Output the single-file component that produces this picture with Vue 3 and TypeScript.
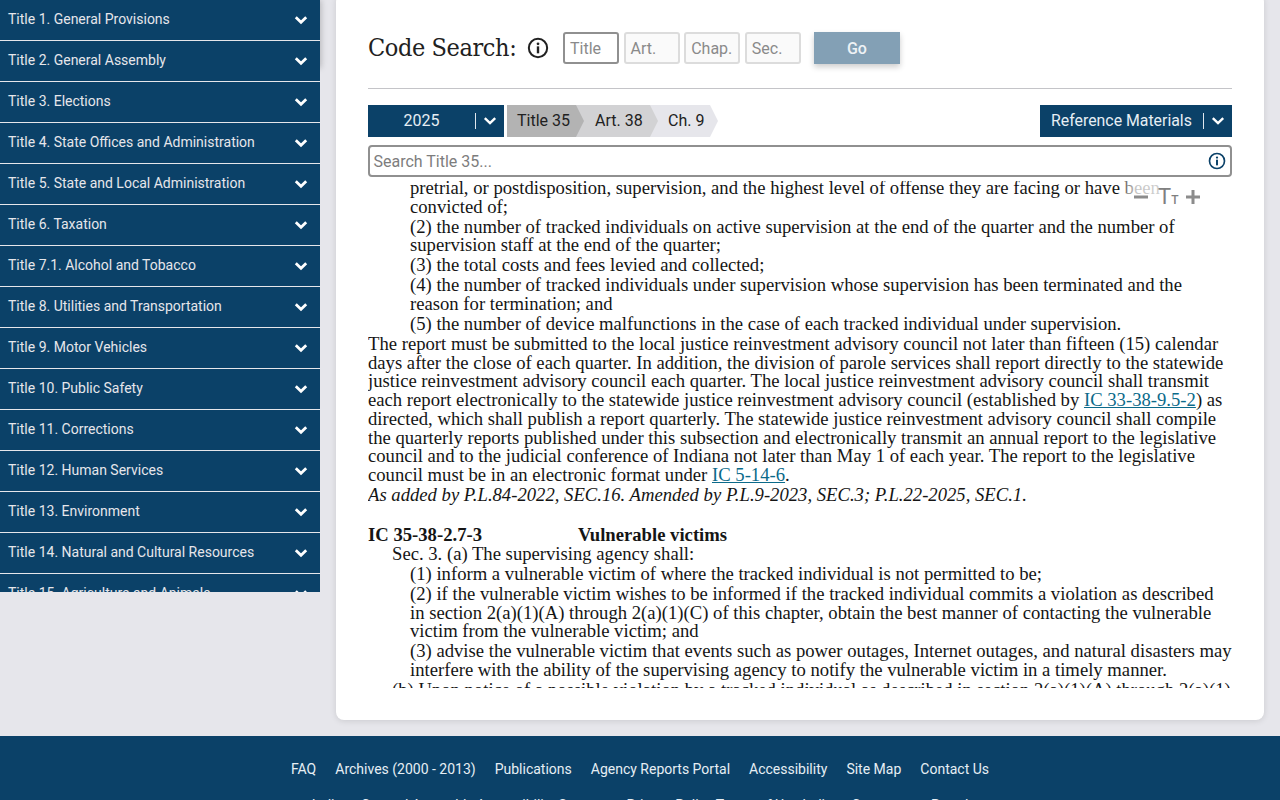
<script setup lang="ts">
const titles: string[] = [
  'Title 1. General Provisions',
  'Title 2. General Assembly',
  'Title 3. Elections',
  'Title 4. State Offices and Administration',
  'Title 5. State and Local Administration',
  'Title 6. Taxation',
  'Title 7.1. Alcohol and Tobacco',
  'Title 8. Utilities and Transportation',
  'Title 9. Motor Vehicles',
  'Title 10. Public Safety',
  'Title 11. Corrections',
  'Title 12. Human Services',
  'Title 13. Environment',
  'Title 14. Natural and Cultural Resources',
  'Title 15. Agriculture and Animals',
]
const links: string[] = ['FAQ', 'Archives (2000 - 2013)', 'Publications', 'Agency Reports Portal', 'Accessibility', 'Site Map', 'Contact Us']
</script>

<template>
  <div class="page">
    <div class="top">
      <div class="side-col">
        <div class="side-shadow"></div>
        <nav class="side">
          <div v-for="t in titles" :key="t" class="side-item">
            <span>{{ t }}</span>
            <svg class="chev" viewBox="0 0 14 10" width="14" height="10"><path d="M1.8 2.2 7 7.2l5.2-5" fill="none" stroke="#fff" stroke-width="2.8" /></svg>
          </div>
        </nav>
      </div>
      <main class="card">
        <div class="search-row">
          <h1>Code Search:</h1>
          <svg class="info" viewBox="0 0 24 24" width="22" height="22"><circle cx="12" cy="12" r="10" fill="none" stroke="#212121" stroke-width="2.2" /><circle cx="12" cy="7.4" r="1.5" fill="#212121" /><rect x="10.7" y="10.2" width="2.6" height="7.6" fill="#212121" /></svg>
          <div class="fld active">Title</div>
          <div class="fld">Art.</div>
          <div class="fld">Chap.</div>
          <div class="fld">Sec.</div>
          <button class="go">Go</button>
        </div>
        <div class="tools">
          <div class="sel year"><span class="sel-label">2025</span><i></i><svg viewBox="0 0 14 10" width="14" height="10"><path d="M1.8 2.2 7 7.2l5.2-5" fill="none" stroke="#fff" stroke-width="2.4" /></svg></div>
          <div class="crumbs">
            <span class="crumb c1">Title 35</span>
            <span class="crumb c2">Art. 38</span>
            <span class="crumb c3">Ch. 9</span>
          </div>
          <div class="sel ref"><span class="sel-label">Reference Materials</span><i></i><svg viewBox="0 0 14 10" width="14" height="10"><path d="M1.8 2.2 7 7.2l5.2-5" fill="none" stroke="#fff" stroke-width="2.4" /></svg></div>
        </div>
        <div class="searchbox">
          <span>Search Title 35...</span>
          <svg viewBox="0 0 24 24" width="18" height="18"><circle cx="12" cy="12" r="10" fill="none" stroke="#0b4168" stroke-width="2.2" /><circle cx="12" cy="7.4" r="1.5" fill="#0b4168" /><rect x="10.7" y="10.2" width="2.6" height="7.6" fill="#0b4168" /></svg>
        </div>
        <div class="doc-wrap">
          <div class="fontctl">
            <svg viewBox="0 0 14 14" width="14" height="14"><rect x="0" y="5.5" width="14" height="3" fill="#8c8c8c" /></svg>
            <span class="tt"><b>T</b><small>T</small></span>
            <svg viewBox="0 0 14 14" width="14" height="14"><path d="M0 7h14M7 0v14" stroke="#8c8c8c" stroke-width="3" fill="none" /></svg>
          </div>
          <div class="doc">
            <div class="scroll">
              <p class="i2">pretrial, or postdisposition, supervision, and the highest level of offense they are facing or have been convicted of;</p>
              <p class="i2">(2) the number of tracked individuals on active supervision at the end of the quarter and the number of supervision staff at the end of the quarter;</p>
              <p class="i2">(3) the total costs and fees levied and collected;</p>
              <p class="i2">(4) the number of tracked individuals under supervision whose supervision has been terminated and the reason for termination; and</p>
              <p class="i2">(5) the number of device malfunctions in the case of each tracked individual under supervision.</p>
              <p>The report must be submitted to the local justice reinvestment advisory council not later than fifteen (15) calendar days after the close of each quarter. In addition, the division of parole services shall report directly to the statewide justice reinvestment advisory council each quarter. The local justice reinvestment advisory council shall transmit each report electronically to the statewide justice reinvestment advisory council (established by <a>IC 33-38-9.5-2</a>) as directed, which shall publish a report quarterly. The statewide justice reinvestment advisory council shall compile the quarterly reports published under this subsection and electronically transmit an annual report to the legislative council and to the judicial conference of Indiana not later than May 1 of each year. The report to the legislative council must be in an electronic format under <a>IC 5-14-6</a>.</p>
              <p class="hist">As added by P.L.84-2022, SEC.16. Amended by P.L.9-2023, SEC.3; P.L.22-2025, SEC.1.</p>
              <h2><span>IC 35-38-2.7-3</span>Vulnerable victims</h2>
              <p class="i1">Sec. 3. (a) The supervising agency shall:</p>
              <p class="i2">(1) inform a vulnerable victim of where the tracked individual is not permitted to be;</p>
              <p class="i2">(2) if the vulnerable victim wishes to be informed if the tracked individual commits a violation as described in section 2(a)(1)(A) through 2(a)(1)(C) of this chapter, obtain the best manner of contacting the vulnerable victim from the vulnerable victim; and</p>
              <p class="i2">(3) advise the vulnerable victim that events such as power outages, Internet outages, and natural disasters may interfere with the ability of the supervising agency to notify the vulnerable victim in a timely manner.</p>
              <p class="i1">(b) Upon notice of a possible violation by a tracked individual as described in section 2(a)(1)(A) through 2(a)(1)</p>
            </div>
          </div>
        </div>
      </main>
    </div>
    <footer class="foot">
      <div class="links"><span v-for="l in links" :key="l">{{ l }}</span></div>
      <div class="legal">Indiana General Assembly Accessibility Statement Privacy Policy Terms of Use Indiana Government Portal</div>
    </footer>
  </div>
</template>

<style>
html, body { margin: 0; background: #e6e6eb; }
body { overflow: hidden; }
</style>

<style scoped>
.page { width: 1280px; height: 800px; overflow: hidden; background: #e6e6eb; font-family: Roboto, sans-serif; }
.top { display: flex; height: 736px; }
.side-col { position: relative; width: 320px; flex: none; }
.side-shadow { position: absolute; left: 0; top: 0; width: 320px; height: 68px; box-shadow: 1px 0 6px rgba(0,0,0,.22); }
.side { position: relative; width: 320px; height: 592px; overflow: hidden; background: #0b4168; }
.side-item { box-sizing: border-box; height: 41px; border-bottom: 1px solid #e6e6eb; display: flex; align-items: center; justify-content: space-between; padding: 0 12px 2px 8px; color: #e6e6eb; font-size: 14px; }
.chev { margin-top: 1px; }
.card { margin: -6px 0 0 16px; width: 928px; height: 726px; background: #fff; border-radius: 8px; box-shadow: 0 1px 6px rgba(0,0,0,.12); padding: 38px 32px 32px; box-sizing: border-box; display: flex; flex-direction: column; }
.search-row { display: flex; align-items: center; height: 32px; padding-bottom: 24px; border-bottom: 1px solid #c4c4c8; }
h1 { margin: 0 0 2px; width: 149px; white-space: nowrap; font: 400 25px "DejaVu Serif Condensed", "DejaVu Serif", serif; color: #212121; letter-spacing: -0.4px; }
.info { margin-left: 10px; margin-right: 14px; }
.fld { width: 56px; height: 32px; box-sizing: border-box; border: 2px solid #dcdcdc; border-radius: 3px; margin-right: 4.6px; padding-left: 5px; font-size: 16px; line-height: 29px; color: #8a8a8a; background: #fafafa; }
.fld.active { border-color: #909090; background: #fff; }
.go { margin-left: 8.6px; width: 86px; height: 32px; border: 0; background: #83a0b5; color: #eef2f5; font: 500 16px Roboto, sans-serif; box-shadow: 0 3px 6px rgba(0,0,0,.2); }
.tools { display: flex; margin-top: 16px; height: 32px; }
.sel { background: #0b4168; color: #e6eef4; display: flex; align-items: center; font-size: 16px; height: 32px; }
.sel-label { padding-bottom: 2px; }
.sel i { width: 1px; height: 16px; background: #dfe7ee; margin: 0 7px 0 0; }
.sel svg { margin-right: 7px; }
.year { width: 136px; }
.year .sel-label { width: 107px; text-align: center; }
.ref { margin-left: auto; width: 192px; }
.ref .sel-label { width: 163px; text-align: center; font-size: 15.85px; }
.crumbs { display: flex; margin-left: 3px; }
.crumb { height: 32px; line-height: 32px; font-size: 16px; color: #212121; display: block; box-sizing: border-box; position: relative; }
.c1 { width: 77px; padding-left: 10px; background: #b3b3b3; clip-path: polygon(0 0, 69px 0, 77px 50%, 69px 100%, 0 100%); z-index: 3; }
.c2 { width: 82px; margin-left: -8px; background: #d2d2d4; clip-path: polygon(0 0, 74px 0, 82px 50%, 74px 100%, 0 100%); padding-left: 19px; z-index: 2; }
.c3 { width: 68px; margin-left: -8px; background: #e6e6eb; clip-path: polygon(0 0, 60px 0, 68px 50%, 60px 100%, 0 100%); padding-left: 18px; }
.searchbox { margin-top: 8px; height: 32px; box-sizing: border-box; border: 2px solid #909090; border-radius: 4px; display: flex; align-items: center; justify-content: space-between; padding: 0 4px 0 3.5px; font-size: 16px; color: #7d7d7d; }
.doc-wrap { position: relative; margin-top: 4px; }
.doc { height: 507px; overflow: hidden; font: 18.667px/18.75px "Liberation Serif", serif; color: #151515; }
.scroll { margin-top: -2px; }
p { margin: 0; }
.doc p { margin: 0 0 1.2px; }
.i1 { padding-left: 24px; }
.i2 { padding-left: 42px; }
.hist { font-style: italic; }
h2 { margin: 20px 0 0; font: 700 18.667px/20px "Liberation Serif", serif; }
h2 span { display: inline-block; width: 210px; }
a { color: #0b6a8a; text-decoration: underline; }
.fontctl { position: absolute; right: 0; top: 0; width: 108px; height: 30px; display: flex; justify-content: flex-end; align-items: center; gap: 10px; padding: 2px 32px 0 0; box-sizing: border-box; background: linear-gradient(to right, rgba(255,255,255,.3), rgba(255,255,255,.75) 10%, rgba(255,255,255,.8) 34%, #fff 40%); z-index: 2; }
.tt { color: #808080; font-size: 22px; line-height: 1; width: 18px; display: flex; align-items: baseline; }
.tt b { font-weight: 400; }
.tt small { font-size: 12px; font-weight: 500; }
.foot { height: 64px; background: #0b4168; color: #e6eef4; font-size: 14px; overflow: hidden; text-align: center; }
.links { display: flex; justify-content: center; gap: 19px; padding-top: 25px; line-height: 16px; }
.legal { margin-top: 20px; }
</style>
